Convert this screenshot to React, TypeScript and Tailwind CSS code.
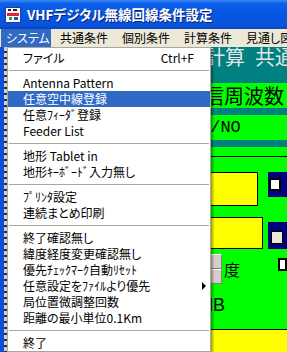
import React from 'react';

type Entry = { label: string; shortcut?: string; active?: boolean; sub?: boolean } | 'sep';

const MENU: Entry[] = [
  { label: 'ファイル', shortcut: 'Ctrl+F' },
  'sep',
  { label: 'Antenna Pattern' },
  { label: '任意空中線登録', active: true },
  { label: '任意ﾌｨｰﾀﾞ登録' },
  { label: 'Feeder List' },
  'sep',
  { label: '地形 Tablet in' },
  { label: '地形ｷｰﾎﾞｰﾄﾞ入力無し' },
  'sep',
  { label: 'ﾌﾟﾘﾝﾀ設定' },
  { label: '連続まとめ印刷' },
  'sep',
  { label: '終了確認無し' },
  { label: '緯度経度変更確認無し' },
  { label: '優先ﾁｪｯｸﾏｰｸ自動ﾘｾｯﾄ' },
  { label: '任意設定をﾌｧｲﾙより優先', sub: true },
  { label: '局位置微調整回数' },
  { label: '距離の最小単位0.1Km' },
  'sep',
  { label: '終了' },
];

const TOP_MENU = ['共通条件', '個別条件', '計算条件', '見通し図'];

// half-width katakana keep their fixed width, full-width kana get proportional widths
const Label = ({ text }: { text: string }) => {
  const parts = text.split(/([\uFF61-\uFF9F]+)/).filter(Boolean);
  return (
    <span>
      {parts.map((p, i) =>
        /[\uFF61-\uFF9F]/.test(p) ? (
          <span key={i}>{p}</span>
        ) : (
          <span key={i} className="[font-feature-settings:'palt']">{p}</span>
        )
      )}
    </span>
  );
};

const AppIcon = () => (
  <svg width="16" height="16" viewBox="0 0 16 16">
    <rect x="0.5" y="0.5" width="15" height="15" fill="#fff" stroke="#2a3a9a" />
    <rect x="3" y="2" width="3" height="2" fill="#223" />
    <rect x="8" y="2" width="4" height="2" fill="#223" />
    <rect x="2" y="6" width="12" height="3" fill="#e0203a" />
    <rect x="4" y="10" width="3" height="3" fill="#1aa84a" />
    <rect x="9" y="10" width="4" height="3" fill="#2050d0" />
  </svg>
);

const SpinButton = () => (
  <div className="h-[15px] w-[16px] bg-[#D4D0C8] border-t border-l border-t-white border-l-white border-b border-r border-b-[#808080] border-r-[#808080]" />
);

export default function App() {
  return (
    <div className="relative w-[287px] h-[352px] overflow-hidden bg-[#ECE9D8] font-['Noto_Sans_CJK_JP','Noto_Sans',sans-serif]">
      {/* Title bar */}
      <div className="h-[29px] flex items-center pl-[5px] gap-[6px] bg-[linear-gradient(to_bottom,#3d8cf7_0%,#0c5fe8_12%,#0556e3_55%,#0a53dc_85%,#0646c2_100%)]">
        <AppIcon />
        <span className="text-white font-bold text-[13.5px] leading-none whitespace-nowrap [font-feature-settings:'palt'] [text-shadow:1px_1px_0_#0a1f7a]">
          VHFデジタル無線回線条件設定
        </span>
      </div>

      {/* Menu bar */}
      <div className="h-[18px] flex">
        <div className="w-[4px] bg-[#0b4fd9]" />
        <div className="flex-1 flex items-stretch text-[12px] leading-[16px] whitespace-nowrap [font-feature-settings:'palt']">
          <div className="ml-[1px] w-[50px] pl-[5px] flex items-center bg-[#316AC5] text-white">システム</div>
          {TOP_MENU.map((m) => (
            <div key={m} className="pl-[9px] pr-[5px] flex items-center text-black">{m}</div>
          ))}
        </div>
      </div>

      {/* Client area */}
      <div className="flex h-[305px]">
        <div className="w-[4px] bg-[#0b4fd9]" />
        <div className="w-[3px] bg-[repeating-linear-gradient(to_bottom,#d4d0c8_0px,#d4d0c8_4px,#1c2b70_4px,#1c2b70_6px)]" />
        <div className="flex-1 min-w-0 flex flex-col overflow-hidden whitespace-nowrap">
          <div className="h-[36px] bg-[#008080] flex items-start pl-[198px] text-[20px] leading-[20px] text-[#e6e6e6]">
            <span>計算</span>
            <span className="ml-[10px]">共通</span>
          </div>
          <div className="h-[25px] bg-[#00FF00] pl-[197px] text-[20px] leading-[25px] text-black">信周波数</div>
          <div className="h-[7px] bg-[#008080]" />
          <div className="h-[25px] bg-[#00FF00] pl-[193px] text-[17px] leading-[25px] text-black font-['Liberation_Mono',monospace]">C/NO</div>
          <div className="h-[7px] bg-[#008080]" />
          <div className="h-[183px] bg-[#00FF00] border-b border-black flex flex-col">
            <div className="mt-[9px] h-px bg-black" />
            <div className="mt-[15px] flex items-start">
              <div className="ml-[173px] w-[84px] h-[34px] bg-[#FFFF00] border border-black" />
              <div className="ml-[10px] w-[20px] h-[25px] bg-[#000080] pt-[6px] pl-[1px]">
                <div className="w-[12px] h-[13px] bg-white border-2 border-black" />
              </div>
            </div>
            <div className="mt-[11px] flex items-end">
              <div className="ml-[173px] w-[89px] h-[32px] bg-[#FFFF00] border border-black" />
              <div className="ml-[5px] w-[20px] h-[27px] bg-[#000080] pt-[9px] pl-[3px]">
                <div className="w-[12px] h-[13px] bg-[#ECE9D8] border border-black" />
              </div>
            </div>
            <div className="mt-[4px] h-[31px] flex items-center">
              <div className="ml-[199px] flex flex-col">
                <SpinButton />
                <SpinButton />
              </div>
              <span className="ml-[2px] text-[16px] leading-none text-black">度</span>
              <div className="ml-[38px] self-start mt-[5px] w-[13px] h-[13px] bg-white border-2 border-black" />
            </div>
            <div className="mt-[11px] pl-[196px] text-[18px] leading-[20px] text-black font-['Liberation_Sans',sans-serif]">dB</div>
          </div>
          <div className="flex-1 bg-[#FFFF00]" />
        </div>
      </div>

      {/* Dropdown menu */}
      <div className="absolute left-[7px] top-[47px] w-[204px] bg-white border border-[#ACA899] pt-[2px] text-[12px] text-black shadow-[2px_2px_2px_rgba(0,0,0,0.35)]">
        {MENU.map((e, i) =>
          e === 'sep' ? (
            <div key={i} className="h-[9px] pt-[4px] px-[1px]">
              <div className="h-px bg-[#ACA899]" />
            </div>
          ) : (
            <div
              key={i}
              className={`h-[16px] flex items-center pl-[15px] whitespace-nowrap ${e.shortcut ? 'pr-[16px]' : 'pr-[4px]'} ${e.active ? 'bg-[#316AC5] text-white' : ''}`}
            >
              <Label text={e.label} />
              {e.shortcut && <span className="ml-auto">{e.shortcut}</span>}
              {e.sub && (
                <span className="ml-auto w-0 h-0 border-l-[4px] border-l-black border-y-[4px] border-y-transparent" />
              )}
            </div>
          )
        )}
      </div>
    </div>
  );
}
